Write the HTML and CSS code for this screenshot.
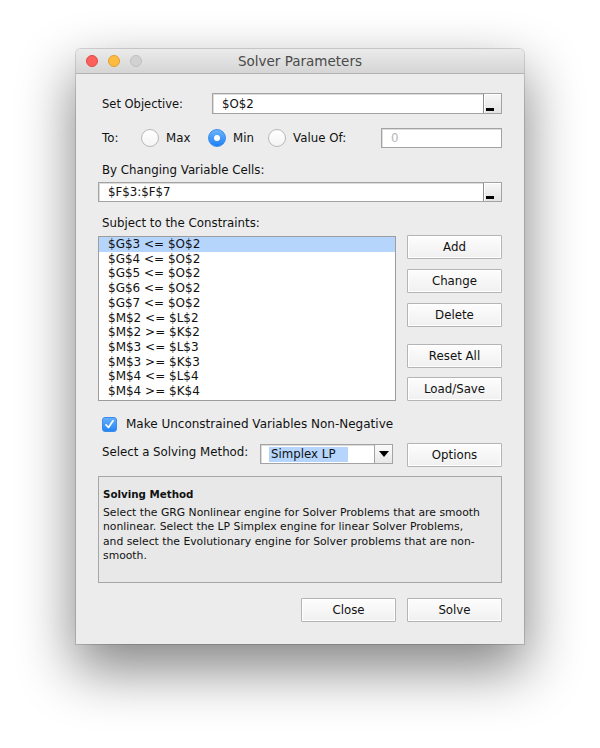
FILE: index.html
```html
<!DOCTYPE html>
<html lang="en">
<head>
    <meta charset="UTF-8">
    <meta name="viewport" content="width=device-width, initial-scale=1.0">
    <title>Solver Parameters</title>
    <link rel="stylesheet" href="styles.css">
</head>
<body>

    <div class="screen">
        <div class="window">
            <div class="titlebar">
                <div class="lights">
                    <span class="light red"></span>
                    <span class="light yellow"></span>
                    <span class="light gray"></span>
                </div>
                <div class="title">Solver Parameters</div>
            </div>

            <div class="content">
                <div class="row objective">
                    <span class="label objective-label">Set Objective:</span>
                    <div class="field ref objective-field">
                        <span class="field-text">$O$2</span>
                        <span class="ref-btn"><span class="ref-bar"></span></span>
                    </div>
                </div>

                <div class="row to-row">
                    <span class="label to-label">To:</span>
                    <div class="option opt-max"><span class="radio"></span><span>Max</span></div>
                    <div class="option opt-min"><span class="radio checked"></span><span>Min</span></div>
                    <div class="option opt-value"><span class="radio"></span><span>Value Of:</span></div>
                    <div class="field value-field"><span class="field-text muted">0</span></div>
                </div>

                <div class="label block-label changing-label">By Changing Variable Cells:</div>
                <div class="field ref cells-field">
                    <span class="field-text">$F$3:$F$7</span>
                    <span class="ref-btn"><span class="ref-bar"></span></span>
                </div>

                <div class="label block-label subject-label">Subject to the Constraints:</div>
                <div class="constraints">
                    <ul class="list">
                        <li class="selected">$G$3 &lt;= $O$2</li>
                        <li>$G$4 &lt;= $O$2</li>
                        <li>$G$5 &lt;= $O$2</li>
                        <li>$G$6 &lt;= $O$2</li>
                        <li>$G$7 &lt;= $O$2</li>
                        <li>$M$2 &lt;= $L$2</li>
                        <li>$M$2 &gt;= $K$2</li>
                        <li>$M$3 &lt;= $L$3</li>
                        <li>$M$3 &gt;= $K$3</li>
                        <li>$M$4 &lt;= $L$4</li>
                        <li>$M$4 &gt;= $K$4</li>
                    </ul>
                    <div class="side-buttons">
                        <button class="btn">Add</button>
                        <button class="btn">Change</button>
                        <button class="btn">Delete</button>
                        <button class="btn reset">Reset All</button>
                        <button class="btn load">Load/Save</button>
                    </div>
                </div>

                <div class="row check-row">
                    <span class="checkbox">
                        <svg width="11" height="11" viewBox="0 0 11 11"><path d="M2 5.8 L4.5 8.5 L9 1.8" fill="none" stroke="#fff" stroke-width="1.7" stroke-linecap="round" stroke-linejoin="round"/></svg>
                    </span>
                    <span class="label check-label">Make Unconstrained Variables Non-Negative</span>
                </div>

                <div class="row method-row">
                    <span class="label method-label">Select a Solving Method:</span>
                    <div class="select">
                        <span class="select-text">Simplex LP</span>
                        <span class="select-btn">
                            <svg width="10" height="6" viewBox="0 0 10 6"><path d="M0 0 H10 L5 6 Z" fill="#000"/></svg>
                        </span>
                    </div>
                    <button class="btn options">Options</button>
                </div>

                <div class="info">
                    <div class="info-title">Solving Method</div>
                    <p class="info-text">Select the GRG Nonlinear engine for Solver Problems that are smooth<br>nonlinear. Select the LP Simplex engine for linear Solver Problems,<br>and select the Evolutionary engine for Solver problems that are non-<br>smooth.</p>
                </div>

                <div class="footer">
                    <button class="btn">Close</button>
                    <button class="btn">Solve</button>
                </div>
            </div>
        </div>
    </div>

</body>
</html>
```

FILE: styles.css
```css
body {
    margin: 0;
    background-color: #ffffff;
    font-family: "DejaVu Sans", Verdana, sans-serif;
    color: #111;
}

.screen {
    padding: 49px 0 0 76px;
    height: 699px;
}

.window {
    width: 448px;
    background-color: #ececec;
    border-radius: 5px 5px 0 0;
    box-shadow: 0 0 0 1px rgba(0, 0, 0, 0.14), 0 24px 55px 2px rgba(0, 0, 0, 0.48);
}

/* title bar */
.titlebar {
    position: relative;
    height: 24px;
    background: linear-gradient(#ebebeb, #d5d5d5);
    border-bottom: 1px solid #b3b3b3;
    border-radius: 5px 5px 0 0;
}

.lights {
    position: absolute;
    left: 10px;
    top: 6px;
    display: flex;
    gap: 10px;
}

.light {
    width: 10px;
    height: 10px;
    border-radius: 50%;
    border: 1px solid;
}

.red { background-color: #fc605c; border-color: #de4a45; }
.yellow { background-color: #fdbc40; border-color: #dea034; }
.gray { background-color: #d1d1d1; border-color: #c0c0c0; }

.title {
    text-align: center;
    font-size: 13.5px;
    line-height: 25px;
    color: #4a4a4a;
}

/* content */
.content {
    padding: 0 22px 22px 22px;
}

.label {
    font-size: 11.8px;
    line-height: 16px;
    white-space: nowrap;
}

.row {
    display: flex;
    align-items: center;
}

.objective {
    margin-top: 19px;
}

.objective-label {
    width: 110px;
    padding-left: 4px;
    font-size: 11.5px;
}

.field {
    position: relative;
    box-sizing: border-box;
    height: 20px;
    background-color: #fff;
    border: 1px solid #a3a3a3;
    box-shadow: inset 1px 1px 0 #dcdcdc;
    display: flex;
    align-items: center;
}

.field-text {
    font-size: 11.8px;
    padding-left: 9px;
}

.muted {
    color: #b4b4b4;
}

.objective-field {
    width: 290px;
    height: 21px;
}

.ref-btn {
    position: absolute;
    right: 0;
    top: 0;
    bottom: 0;
    width: 17px;
    border-left: 1px solid #8f8f8f;
    background: linear-gradient(#f7f7f7, #e4e4e4);
    box-shadow: inset 1px 1px 0 #fff;
}

.ref-bar {
    position: absolute;
    left: 2px;
    bottom: 2px;
    width: 8px;
    height: 3px;
    background-color: #000;
}

.to-row {
    margin-top: 14px;
    height: 20px;
}

.to-label {
    width: 39px;
    padding-left: 4px;
}

.option {
    display: flex;
    align-items: center;
    gap: 7px;
    font-size: 11.8px;
}

.opt-max { width: 67px; }
.opt-min { width: 60px; }
.opt-value { width: 113px; }

.radio {
    box-sizing: border-box;
    width: 18px;
    height: 18px;
    border-radius: 50%;
    background: linear-gradient(#ffffff, #f4f4f4);
    border: 1px solid #b8b8b8;
    flex-shrink: 0;
}

.radio.checked {
    position: relative;
    background: linear-gradient(#6cb3fa, #1f81f6);
    border-color: #3b8cf0;
}

.radio.checked::after {
    content: "";
    position: absolute;
    left: 5px;
    top: 5px;
    width: 6px;
    height: 6px;
    border-radius: 50%;
    background-color: #fff;
}

.value-field {
    width: 121px;
}

.block-label {
    padding-left: 4px;
}

.changing-label {
    margin-top: 14px;
}

.cells-field {
    margin-top: 4px;
    width: 404px;
}

.subject-label {
    margin-top: 13px;
}

/* constraints */
.constraints {
    display: flex;
    justify-content: space-between;
    margin-top: 4px;
}

.list {
    list-style: none;
    margin: 1px 0 0 0;
    padding: 0;
    width: 298px;
    background-color: #fff;
    border: 1px solid #9d9d9d;
    box-sizing: border-box;
}

.list li {
    font-size: 12px;
    line-height: 14.7px;
    padding-left: 9px;
    white-space: nowrap;
}

.list li.selected {
    background-color: #b5d5fd;
}

.side-buttons {
    display: flex;
    flex-direction: column;
    gap: 10px;
    width: 95px;
}

.btn {
    box-sizing: border-box;
    width: 95px;
    height: 24px;
    padding: 0;
    font-family: "DejaVu Sans", Verdana, sans-serif;
    font-size: 11.8px;
    color: #111;
    background: linear-gradient(#fdfdfd, #f0f0f0);
    border: 1px solid #b4b4b4;
    border-radius: 1px;
    box-shadow: inset 0 0 0 1px #ffffff;
}

.btn.reset {
    margin-top: 7px;
}

.btn.load {
    margin-top: -1px;
}

/* checkbox */
.check-row {
    margin-top: 15px;
    padding-left: 4px;
    gap: 9px;
}

.check-label {
    font-size: 12px;
}

.checkbox {
    box-sizing: border-box;
    width: 15px;
    height: 15px;
    border-radius: 3px;
    background: linear-gradient(#66b0fa, #2385f6);
    border: 1px solid #3a8bee;
    display: flex;
    align-items: center;
    justify-content: center;
}

/* solving method */
.method-row {
    margin-top: 11px;
    align-items: flex-start;
}

.method-label {
    width: 158px;
    padding-left: 4px;
    margin-top: 1px;
}

.select {
    position: relative;
    box-sizing: border-box;
    width: 133px;
    height: 20px;
    margin-top: 1px;
    background-color: #fff;
    border: 1px solid #a3a3a3;
    box-shadow: inset 1px 1px 0 #dcdcdc;
    display: flex;
    align-items: center;
}

.select-text {
    margin-left: 8px;
    padding: 0 12px 0 2px;
    font-size: 11.8px;
    line-height: 15px;
    background-color: #b5d5fd;
}

.select-btn {
    position: absolute;
    right: 0;
    top: 0;
    bottom: 0;
    width: 17px;
    border-left: 1px solid #a3a3a3;
    background: linear-gradient(#fafafa, #e8e8e8);
    display: flex;
    align-items: center;
    justify-content: center;
}

.btn.options {
    margin-left: 14px;
}

.info {
    margin-top: 9px;
    height: 107px;
    box-sizing: border-box;
    border: 1px solid #a6a6a6;
    background-color: #e8e8e8;
    padding: 10px 4px 0 4px;
}

.info-title {
    font-size: 10.3px;
    font-weight: bold;
    line-height: 14.5px;
}

.info-text {
    margin: 4px 0 0 0;
    font-size: 10.8px;
    line-height: 14.5px;
    white-space: nowrap;
}

.footer {
    display: flex;
    justify-content: flex-end;
    gap: 11px;
    margin-top: 15px;
}
```
